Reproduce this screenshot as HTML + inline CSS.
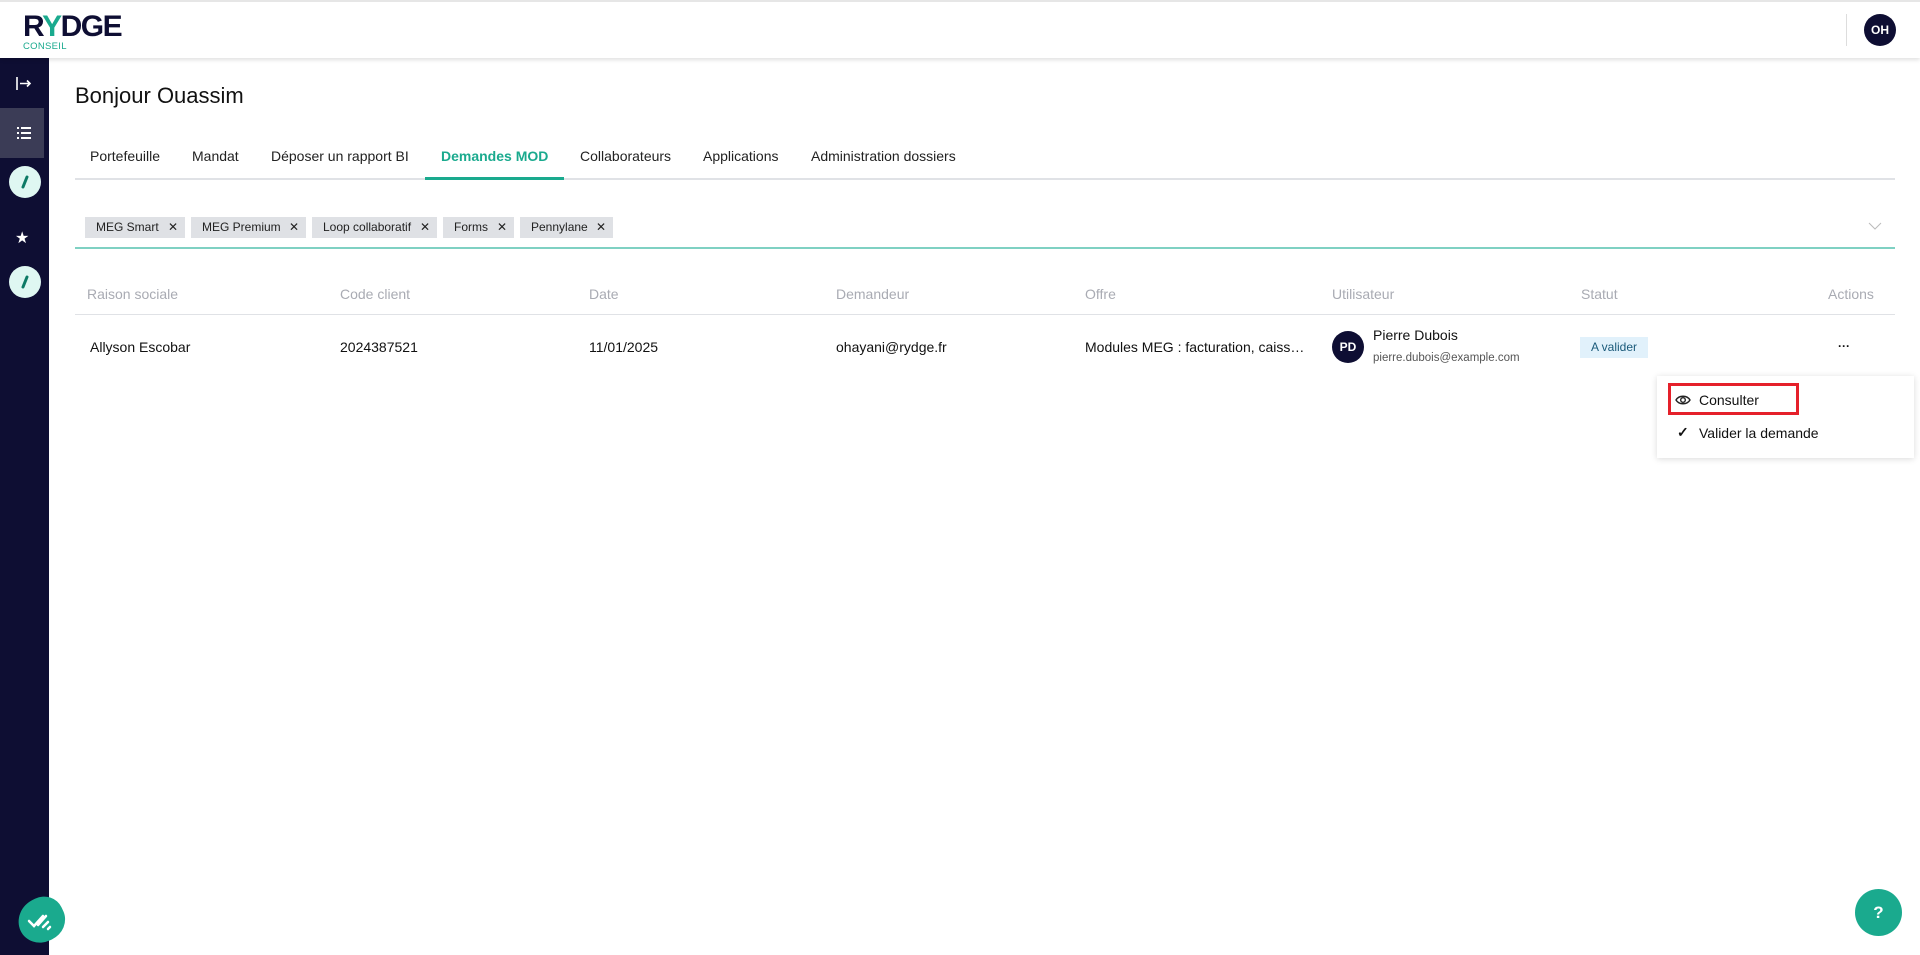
<!DOCTYPE html>
<html><head><meta charset="utf-8"><style>
*{box-sizing:border-box;margin:0;padding:0}
body{width:1920px;height:955px;overflow:hidden;background:#fff;font-family:"Liberation Sans",Arial,sans-serif;color:#111;position:relative}
.abs{position:absolute}
.hdr{left:0;top:0;width:1920px;height:58px;border-top:2px solid #e6e6e6;background:#fff;box-shadow:0 2px 4px rgba(0,0,0,.12);z-index:2}
.side{left:0;top:58px;width:49px;height:897px;background:#0e0e33}
.tab{top:148px;font-size:14px;color:#222}
.chip{top:217px;height:21px;background:#dfe1e5;font-size:12px;line-height:21px;padding-left:11px;color:#222}
.chip span{position:absolute;right:7px;top:0;font-size:12px}
.th{top:286px;font-size:14px;color:#a9abb3}
.td{top:339px;font-size:14px;color:#111}
</style></head><body>
<div class="abs hdr">
 <div class="abs" style="left:23px;top:8px;font-size:30px;font-weight:bold;letter-spacing:-1.5px;color:#0e0e33">R<span style="color:#1aaa8e">Y</span>DGE</div>
 <div class="abs" style="left:23px;top:39px;font-size:9.5px;color:#1aaa8e;letter-spacing:.3px">CONSEIL</div>
 <div class="abs" style="left:1846px;top:12px;width:1px;height:32px;background:#ddd"></div>
 <div class="abs" style="left:1864px;top:12px;width:32px;height:32px;border-radius:50%;background:#0e0e33;color:#fff;font-size:12px;font-weight:bold;text-align:center;line-height:32px">OH</div>
</div>
<div class="abs side"></div>
<svg class="abs" style="left:0;top:58px" width="49" height="50"><path d="M17 19v13M20 25.5h10M27 22.5l3 3-3 3" stroke="#fff" stroke-width="1.6" fill="none"/></svg>
<div class="abs" style="left:0;top:108px;width:44px;height:50px;background:#3b3c56"><svg width="44" height="50"><g fill="#fff"><rect x="17" y="19" width="2" height="2"/><rect x="17" y="24" width="2" height="2"/><rect x="17" y="29" width="2" height="2"/><rect x="21" y="19" width="10" height="2"/><rect x="21" y="24" width="10" height="2"/><rect x="21" y="29" width="10" height="2"/></g></svg></div>
<div class="abs" style="left:9px;top:166px;width:32px;height:32px;border-radius:50%;background:#dff7f2"><svg width="32" height="32"><path d="M14 21L18 11" stroke="#0e7a66" stroke-width="3" stroke-linecap="round"/></svg></div>
<div class="abs" style="left:15px;top:228px;color:#fff;font-size:16px">★</div>
<div class="abs" style="left:9px;top:266px;width:32px;height:32px;border-radius:50%;background:#dff7f2"><svg width="32" height="32"><path d="M14 21L18 11" stroke="#0e7a66" stroke-width="3" stroke-linecap="round"/></svg></div>
<div class="abs" style="left:18px;top:898px;width:47px;height:44px;border-radius:55% 45% 50% 50%;background:#1aaa8e;transform:rotate(-25deg)"></div>
<svg class="abs" style="left:26px;top:905px" width="36" height="30"><path d="M3 16l5 5 9-10M12 20l8-9M17 22l5-5M22 24l2-2" stroke="#fff" stroke-width="2.5" fill="none" stroke-linecap="round"/></svg>

<div class="abs" style="left:75px;top:83px;font-size:22px;color:#111">Bonjour Ouassim</div>
<div class="abs tab" style="left:90px">Portefeuille</div>
<div class="abs tab" style="left:192px">Mandat</div>
<div class="abs tab" style="left:271px">Déposer un rapport BI</div>
<div class="abs tab" style="left:441px;color:#1aaa8e;font-weight:bold">Demandes MOD</div>
<div class="abs tab" style="left:580px">Collaborateurs</div>
<div class="abs tab" style="left:703px">Applications</div>
<div class="abs tab" style="left:811px">Administration dossiers</div>
<div class="abs" style="left:75px;top:178px;width:1820px;height:2px;background:#e0e2e6"></div>
<div class="abs" style="left:425px;top:177px;width:139px;height:3px;background:#1aaa8e"></div>

<div class="abs chip" style="left:85px;width:100px">MEG Smart<span>✕</span></div>
<div class="abs chip" style="left:191px;width:115px">MEG Premium<span>✕</span></div>
<div class="abs chip" style="left:312px;width:125px">Loop collaboratif<span>✕</span></div>
<div class="abs chip" style="left:443px;width:71px">Forms<span>✕</span></div>
<div class="abs chip" style="left:520px;width:93px">Pennylane<span>✕</span></div>
<svg class="abs" style="left:1868px;top:221px" width="14" height="10"><path d="M1 2l6 6 6-6" stroke="#bbb" fill="none"/></svg>
<div class="abs" style="left:75px;top:247px;width:1820px;height:2px;background:#7fd1c3"></div>

<div class="abs th" style="left:87px">Raison sociale</div>
<div class="abs th" style="left:340px">Code client</div>
<div class="abs th" style="left:589px">Date</div>
<div class="abs th" style="left:836px">Demandeur</div>
<div class="abs th" style="left:1085px">Offre</div>
<div class="abs th" style="left:1332px">Utilisateur</div>
<div class="abs th" style="left:1581px">Statut</div>
<div class="abs th" style="left:1828px">Actions</div>
<div class="abs" style="left:75px;top:314px;width:1820px;height:1px;background:#e0e2e6"></div>

<div class="abs td" style="left:90px">Allyson Escobar</div>
<div class="abs td" style="left:340px">2024387521</div>
<div class="abs td" style="left:589px">11/01/2025</div>
<div class="abs td" style="left:836px">ohayani@rydge.fr</div>
<div class="abs td" style="left:1085px">Modules MEG : facturation, caiss…</div>
<div class="abs" style="left:1332px;top:331px;width:32px;height:32px;border-radius:50%;background:#0e0e33;color:#fff;font-size:12px;font-weight:bold;text-align:center;line-height:32px">PD</div>
<div class="abs" style="left:1373px;top:327px;font-size:14px">Pierre Dubois</div>
<div class="abs" style="left:1373px;top:352px;font-size:11.5px;color:#555">pierre.dubois@example.com</div>
<div class="abs" style="left:1580px;top:337px;width:68px;height:21px;background:#e1f1fb;color:#1a5a7a;font-size:12px;text-align:center;line-height:21px">A valider</div>
<div class="abs" style="left:1838px;top:339px;font-size:12px;font-weight:bold">···</div>

<div class="abs" style="left:1657px;top:376px;width:257px;height:82px;background:#fff;box-shadow:0 1px 6px rgba(0,0,0,.15)"></div>
<div class="abs" style="left:1668px;top:383px;width:131px;height:32px;border:3px solid #e5202a"></div>
<svg class="abs" style="left:1675px;top:393px" width="16" height="14"><path d="M1 7C4 2 12 2 15 7C12 12 4 12 1 7Z" stroke="#222" stroke-width="1.4" fill="none"/><circle cx="8" cy="7" r="2.3" stroke="#222" stroke-width="1.4" fill="none"/></svg>
<div class="abs" style="left:1699px;top:392px;font-size:14px">Consulter</div>
<div class="abs" style="left:1677px;top:424px;font-size:14px;font-weight:bold">✓</div>
<div class="abs" style="left:1699px;top:425px;font-size:14px">Valider la demande</div>

<div class="abs" style="left:1855px;top:889px;width:47px;height:47px;border-radius:50%;background:#1aaa8e;color:#fff;font-weight:bold;font-size:17px;text-align:center;line-height:47px">?</div>
</body></html>
